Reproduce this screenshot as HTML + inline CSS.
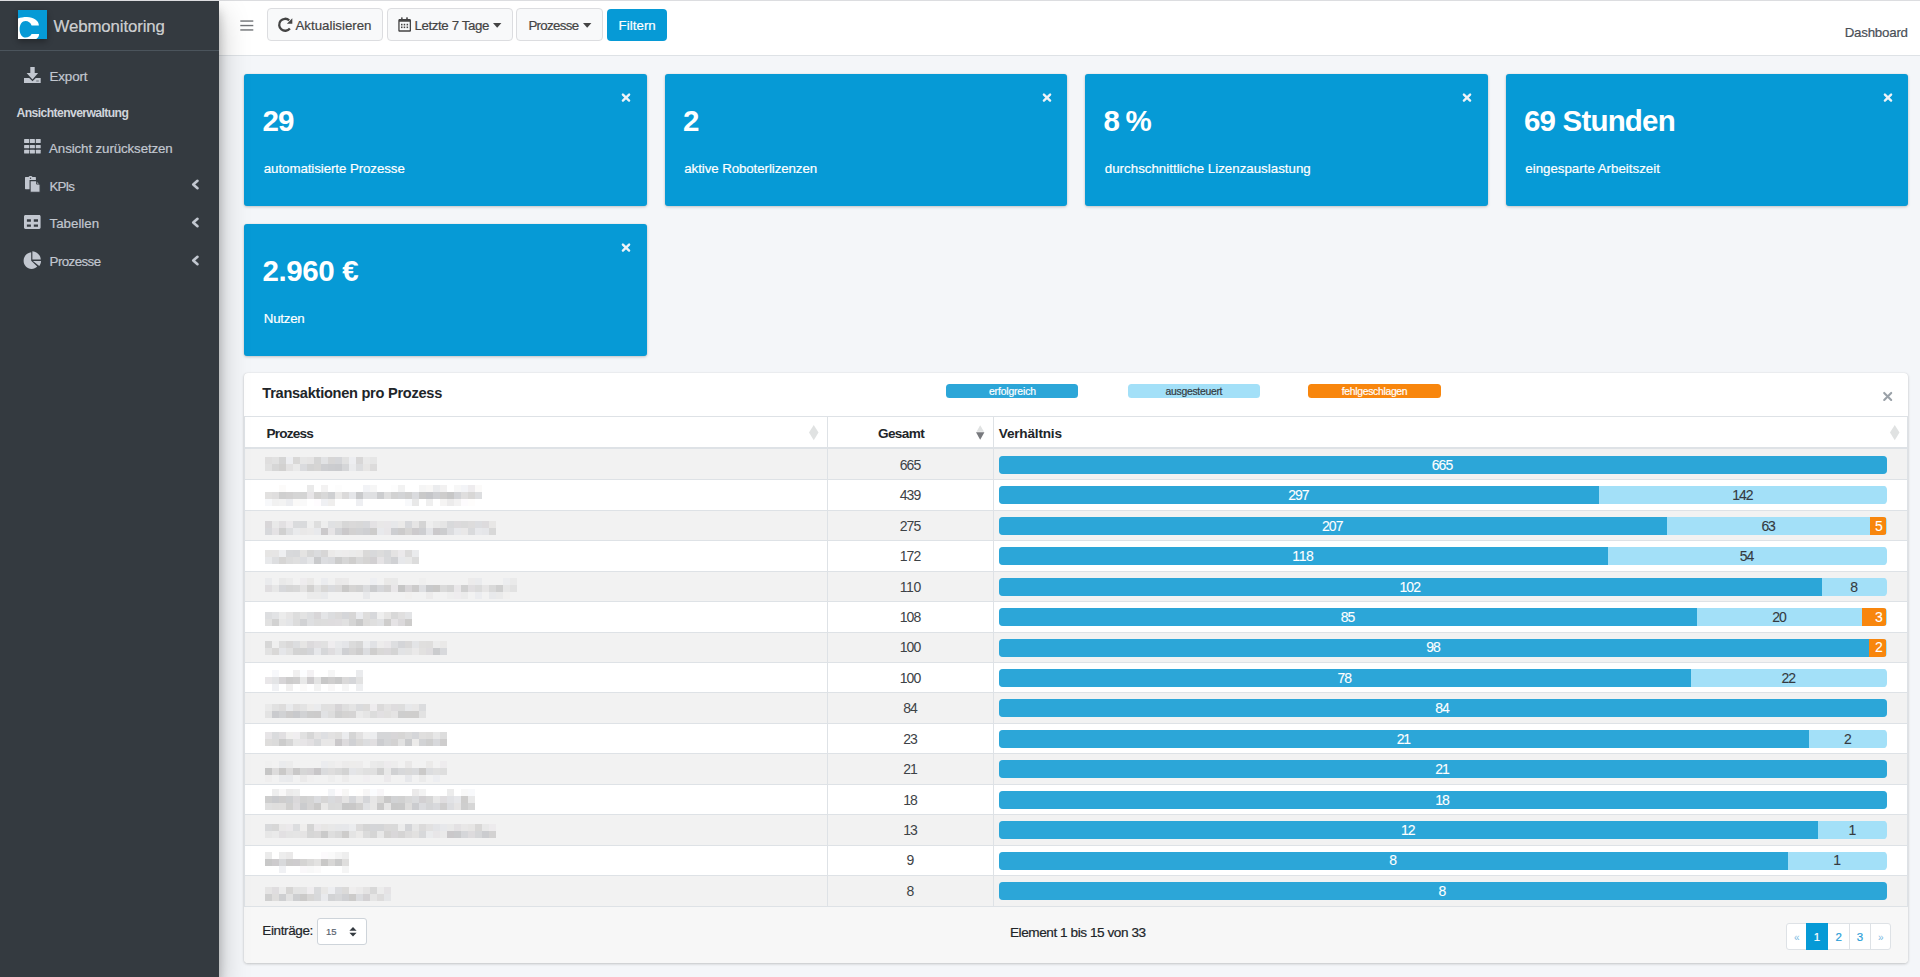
<!DOCTYPE html><html><head><meta charset="utf-8"><style>
html,body{margin:0;padding:0;width:1920px;height:977px;overflow:hidden;background:#f4f6f9;font-family:"Liberation Sans",sans-serif;}
.t{position:absolute;white-space:nowrap;font-family:"Liberation Sans",sans-serif;-webkit-text-stroke:0.2px currentColor;}
svg{position:absolute;overflow:visible}
</style></head><body>

<div style="position:absolute;left:0px;top:0px;width:1920px;height:1px;background:#dcdde0;"></div>
<div style="position:absolute;left:219px;top:1px;width:1701px;height:54px;background:#fff;"></div>
<div style="position:absolute;left:219px;top:55px;width:1701px;height:1px;background:#dee2e6;"></div>
<div style="position:absolute;left:0px;top:1px;width:219px;height:976px;background:#343a40;box-shadow:0 14px 28px rgba(0,0,0,.25),0 10px 10px rgba(0,0,0,.22);z-index:5;"></div>
<div style="position:absolute;left:0;top:0;width:219px;height:977px;z-index:6">
<div style="position:absolute;left:0px;top:0px;width:219px;height:1px;background:#dcdde0;"></div>
<div style="position:absolute;left:0px;top:50px;width:219px;height:1px;background:#4b545c;"></div>
<svg style="left:18px;top:10px;box-shadow:0 3px 6px rgba(0,0,0,.3)" width="29" height="29" viewBox="0 0 29 29">
<rect width="29" height="29" fill="#069ad6"/>
<path d="M0 8.6 C2.5 7.6 5.5 7.1 9 7.1 C15.5 7.1 20.9 10.8 20.9 15.5 L13.6 15.5 C12.6 12.6 10.3 11 7.6 11 C4 11 1.6 14.5 1.6 19.2 C1.6 24 4 27.5 7.6 27.5 C10.3 27.5 12.6 26 13.6 23.9 L21.1 23.9 C21.1 26 20 27.8 18.2 29 L0 29 Z" fill="#fff"/>
</svg>
<div class="t" style="left:53.60px;top:16.00px;font-size:16.8px;line-height:22px;color:rgba(255,255,255,.74);letter-spacing:-0.104px;">Webmonitoring</div>
<svg style="left:24px;top:66px" width="17" height="18" viewBox="0 0 17 18">
<rect x="6.3" y="1" width="4.4" height="6.5" fill="#c2c7d0"/>
<path d="M2.6 7 H14.1 L8.5 13.6 Z" fill="#c2c7d0"/>
<path d="M0 12 H5.2 L8.5 15.2 L11.8 12 H16.7 V17 H0 Z" fill="#c2c7d0"/>
<rect x="12.2" y="14.5" width="2.6" height="1" fill="#343a40" opacity=".6"/>
</svg>
<div class="t" style="left:49.50px;top:68.20px;font-size:13.4px;line-height:18px;color:#c2c7d0;letter-spacing:-0.145px;">Export</div>
<div class="t" style="left:16.60px;top:105.00px;font-size:12.2px;line-height:16px;color:#d0d4db;font-weight:700;-webkit-text-stroke:0;letter-spacing:-0.611px;">Ansichtenverwaltung</div>
<svg style="left:24px;top:139px" width="17" height="15" viewBox="0 0 17 15">
<g fill="#c2c7d0">
<rect x="0.1" y="0.1" width="5" height="4" rx=".5"/><rect x="5.8" y="0.1" width="5.1" height="4" rx=".5"/><rect x="11.8" y="0.1" width="4.9" height="4" rx=".5"/>
<rect x="0.1" y="5.9" width="5" height="3.4" rx=".5"/><rect x="5.8" y="5.9" width="5.1" height="3.4" rx=".5"/><rect x="11.8" y="5.9" width="4.9" height="3.4" rx=".5"/>
<rect x="0.1" y="10.8" width="5" height="3.8" rx=".5"/><rect x="5.8" y="10.8" width="5.1" height="3.8" rx=".5"/><rect x="11.8" y="10.8" width="4.9" height="3.8" rx=".5"/>
</g></svg>
<div class="t" style="left:49.10px;top:139.80px;font-size:13.3px;line-height:18px;color:#c2c7d0;letter-spacing:-0.104px;">Ansicht zurücksetzen</div>
<svg style="left:25px;top:176px" width="16" height="17" viewBox="0 0 16 17">
<path d="M0.6 1 H3.6 C3.9 0.3 4.6 0 5.5 0 C6.4 0 7.1 0.3 7.4 1 H10.3 C10.6 1 10.9 1.3 10.9 1.6 V12.6 C10.9 12.9 10.6 13.2 10.3 13.2 H0.6 C0.3 13.2 0 12.9 0 12.6 V1.6 C0 1.3 .3 1 .6 1 Z" fill="#c2c7d0"/>
<circle cx="5.5" cy="2.2" r=".7" fill="#343a40"/>
<path d="M5.1 4.6 H11.3 L15.1 8.3 V16.3 H5.1 Z" fill="#c2c7d0" stroke="#343a40" stroke-width="1.1"/>
<path d="M11.6 4.6 V8.1 H15.1" fill="none" stroke="#343a40" stroke-width="0.9"/>
</svg>
<div class="t" style="left:49.60px;top:177.50px;font-size:13.3px;line-height:18px;color:#c2c7d0;letter-spacing:-0.921px;">KPIs</div>
<svg style="left:24px;top:215px" width="17" height="15" viewBox="0 0 17 15">
<path fill-rule="evenodd" fill="#c2c7d0" d="M1.5 0 H15.2 C16 0 16.6 .6 16.6 1.5 V12.6 C16.6 13.4 16 14 15.2 14 H1.5 C.6 14 0 13.4 0 12.6 V1.5 C0 .6 .6 0 1.5 0 Z M2.9 4.3 V6.7 H6.9 V4.3 Z M9.8 4.3 V6.7 H14 V4.3 Z M2.9 9.5 V11.8 H6.9 V9.5 Z M9.8 9.5 V11.8 H14 V9.5 Z"/>
</svg>
<div class="t" style="left:49.60px;top:215.20px;font-size:13.3px;line-height:18px;color:#c2c7d0;letter-spacing:-0.006px;">Tabellen</div>
<svg style="left:23px;top:251px" width="19" height="19" viewBox="0 0 19 19">
<path d="M8.2 1.2 V9.8 L14.2 15.6 C12.7 17 10.8 17.9 8.6 17.9 C4.1 17.9 0.6 14.2 0.6 9.7 C0.6 5.3 4 1.6 8.2 1.2 Z" fill="#c2c7d0"/>
<path d="M9.4 0.2 C13.9 0.4 17.6 4.1 17.8 8.6 H9.4 Z" fill="#c2c7d0"/>
<path d="M9.9 9.9 H18 C18 12 17.3 13.6 16.2 14.9 Z" fill="#c2c7d0"/>
</svg>
<div class="t" style="left:49.60px;top:253.00px;font-size:13.3px;line-height:18px;color:#c2c7d0;letter-spacing:-0.566px;">Prozesse</div>
<svg style="left:191px;top:180.3px" width="8" height="9" viewBox="0 0 8 9"><path d="M6.5 0.8 L2.2 4.5 L6.5 8.2" stroke="#c2c7d0" stroke-width="2.6" fill="none" stroke-linecap="round" stroke-linejoin="round"/></svg>
<svg style="left:191px;top:218.1px" width="8" height="9" viewBox="0 0 8 9"><path d="M6.5 0.8 L2.2 4.5 L6.5 8.2" stroke="#c2c7d0" stroke-width="2.6" fill="none" stroke-linecap="round" stroke-linejoin="round"/></svg>
<svg style="left:191px;top:256.1px" width="8" height="9" viewBox="0 0 8 9"><path d="M6.5 0.8 L2.2 4.5 L6.5 8.2" stroke="#c2c7d0" stroke-width="2.6" fill="none" stroke-linecap="round" stroke-linejoin="round"/></svg>
</div>
<svg style="left:240px;top:19px" width="14" height="13" viewBox="0 0 14 13"><g fill="#707377"><rect x="0.3" y="1.35" width="13" height="1.4"/><rect x="0.3" y="5.85" width="13" height="1.4"/><rect x="0.3" y="10.25" width="13" height="1.4"/></g></svg>
<div style="position:absolute;left:267px;top:8px;width:116px;height:33px;background:#f8f9fa;border:1px solid #dcdde0;border-radius:4px;box-sizing:border-box;"></div>
<div style="position:absolute;left:387px;top:8px;width:126px;height:33px;background:#f8f9fa;border:1px solid #dcdde0;border-radius:4px;box-sizing:border-box;"></div>
<div style="position:absolute;left:516px;top:8px;width:87px;height:33px;background:#f8f9fa;border:1px solid #dcdde0;border-radius:4px;box-sizing:border-box;"></div>
<div style="position:absolute;left:607px;top:9px;width:60px;height:32px;background:#069ad6;border-radius:4px;"></div>
<svg style="left:278px;top:17px" width="15" height="15" viewBox="0 0 15 15">
<path d="M11.2 3.3 A6 6 0 1 0 11.9 11.5" stroke="#444" stroke-width="2.3" fill="none"/>
<path d="M8.9 6.7 H14.3 V1.3 Z" fill="#444"/>
</svg>
<div class="t" style="left:295.50px;top:16.75px;font-size:13.3px;line-height:18px;color:#444;letter-spacing:-0.012px;">Aktualisieren</div>
<svg style="left:398px;top:17px" width="14" height="15" viewBox="0 0 14 15">
<path fill-rule="evenodd" fill="#444" d="M1.6 2.1 H11.7 C12.4 2.1 13 2.7 13 3.4 V13.4 C13 14.1 12.4 14.7 11.7 14.7 H1.6 C.9 14.7 .3 14.1 .3 13.4 V3.4 C.3 2.7 .9 2.1 1.6 2.1 Z M1.6 4.8 V13.3 H11.7 V4.8 Z"/>
<rect x="3.1" y="0.3" width="1.5" height="2.4" rx=".4" fill="#444"/><rect x="8.2" y="0.3" width="1.6" height="2.4" rx=".4" fill="#444"/>
<g fill="#444"><rect x="3" y="6.8" width="1.5" height="1.4"/><rect x="5.7" y="6.8" width="1.5" height="1.4"/><rect x="8.6" y="6.8" width="1.5" height="1.4"/>
<rect x="3" y="9.7" width="1.5" height="1.4"/><rect x="5.7" y="9.7" width="1.5" height="1.4"/><rect x="8.6" y="9.7" width="1.5" height="1.4"/></g>
<g fill="#444" opacity=".35"><rect x="3" y="8.2" width="1.5" height="1.5"/><rect x="5.7" y="8.2" width="1.5" height="1.5"/><rect x="8.6" y="8.2" width="1.5" height="1.5"/></g>
</svg>
<div class="t" style="left:414.40px;top:16.70px;font-size:13.3px;line-height:18px;color:#444;letter-spacing:-0.383px;">Letzte 7 Tage</div>
<svg style="left:493px;top:23px" width="9" height="5" viewBox="0 0 9 5"><path d="M0 0 H8.4 L4.2 4.8 Z" fill="#444"/></svg>
<div class="t" style="left:528.40px;top:16.70px;font-size:13.3px;line-height:18px;color:#444;letter-spacing:-0.666px;">Prozesse</div>
<svg style="left:583px;top:23px" width="9" height="5" viewBox="0 0 9 5"><path d="M0 0 H8.4 L4.2 4.8 Z" fill="#444"/></svg>
<div class="t" style="left:618.60px;top:16.70px;font-size:13.3px;line-height:18px;color:#fff;letter-spacing:0.038px;">Filtern</div>
<div class="t" style="left:1844.70px;top:24.00px;font-size:13.3px;line-height:18px;color:#495057;letter-spacing:-0.217px;">Dashboard</div>
<div style="position:absolute;left:244px;top:74px;width:402.5px;height:132px;background:#069ad6;border-radius:3px;box-shadow:0 0 1px rgba(0,0,0,.125),0 1px 3px rgba(0,0,0,.2);"></div>
<div class="t" style="left:262.50px;top:101.40px;font-size:29.5px;line-height:39px;color:#fff;font-weight:700;-webkit-text-stroke:0;letter-spacing:-0.945px;">29</div>
<div class="t" style="left:263.80px;top:159.80px;font-size:13.3px;line-height:18px;color:#fff;letter-spacing:-0.075px;">automatisierte Prozesse</div>
<svg style="left:621.0px;top:92.5px" width="10" height="9" viewBox="0 0 10 9"><path d="M1.9 1.6 L8.1 7.6 M8.1 1.6 L1.9 7.6" stroke="#eef3f7" stroke-width="2.4" stroke-linecap="round"/></svg>
<div style="position:absolute;left:664.5px;top:74px;width:402.5px;height:132px;background:#069ad6;border-radius:3px;box-shadow:0 0 1px rgba(0,0,0,.125),0 1px 3px rgba(0,0,0,.2);"></div>
<div class="t" style="left:683.00px;top:101.40px;font-size:29.5px;line-height:39px;color:#fff;font-weight:700;-webkit-text-stroke:0;">2</div>
<div class="t" style="left:684.30px;top:159.80px;font-size:13.3px;line-height:18px;color:#fff;letter-spacing:-0.082px;">aktive Roboterlizenzen</div>
<svg style="left:1041.5px;top:92.5px" width="10" height="9" viewBox="0 0 10 9"><path d="M1.9 1.6 L8.1 7.6 M8.1 1.6 L1.9 7.6" stroke="#eef3f7" stroke-width="2.4" stroke-linecap="round"/></svg>
<div style="position:absolute;left:1085px;top:74px;width:402.5px;height:132px;background:#069ad6;border-radius:3px;box-shadow:0 0 1px rgba(0,0,0,.125),0 1px 3px rgba(0,0,0,.2);"></div>
<div class="t" style="left:1103.50px;top:101.40px;font-size:29.5px;line-height:39px;color:#fff;font-weight:700;-webkit-text-stroke:0;letter-spacing:-1.344px;">8 %</div>
<div class="t" style="left:1104.80px;top:159.80px;font-size:13.3px;line-height:18px;color:#fff;letter-spacing:0.014px;">durchschnittliche Lizenzauslastung</div>
<svg style="left:1462.0px;top:92.5px" width="10" height="9" viewBox="0 0 10 9"><path d="M1.9 1.6 L8.1 7.6 M8.1 1.6 L1.9 7.6" stroke="#eef3f7" stroke-width="2.4" stroke-linecap="round"/></svg>
<div style="position:absolute;left:1505.5px;top:74px;width:402.5px;height:132px;background:#069ad6;border-radius:3px;box-shadow:0 0 1px rgba(0,0,0,.125),0 1px 3px rgba(0,0,0,.2);"></div>
<div class="t" style="left:1524.00px;top:101.40px;font-size:29.5px;line-height:39px;color:#fff;font-weight:700;-webkit-text-stroke:0;letter-spacing:-0.812px;">69 Stunden</div>
<div class="t" style="left:1525.30px;top:159.80px;font-size:13.3px;line-height:18px;color:#fff;">eingesparte Arbeitszeit</div>
<svg style="left:1882.5px;top:92.5px" width="10" height="9" viewBox="0 0 10 9"><path d="M1.9 1.6 L8.1 7.6 M8.1 1.6 L1.9 7.6" stroke="#eef3f7" stroke-width="2.4" stroke-linecap="round"/></svg>
<div style="position:absolute;left:244px;top:224px;width:402.5px;height:132px;background:#069ad6;border-radius:3px;box-shadow:0 0 1px rgba(0,0,0,.125),0 1px 3px rgba(0,0,0,.2);"></div>
<div class="t" style="left:262.50px;top:251.40px;font-size:29.5px;line-height:39px;color:#fff;font-weight:700;-webkit-text-stroke:0;letter-spacing:-0.397px;">2.960 €</div>
<div class="t" style="left:263.80px;top:309.80px;font-size:13.3px;line-height:18px;color:#fff;letter-spacing:-0.232px;">Nutzen</div>
<svg style="left:621.0px;top:242.5px" width="10" height="9" viewBox="0 0 10 9"><path d="M1.9 1.6 L8.1 7.6 M8.1 1.6 L1.9 7.6" stroke="#eef3f7" stroke-width="2.4" stroke-linecap="round"/></svg>
<div style="position:absolute;left:244px;top:373px;width:1664px;height:590px;background:#fff;border-radius:4px;box-shadow:0 0 1px rgba(0,0,0,.125),0 1px 3px rgba(0,0,0,.2);"></div>
<div class="t" style="left:262.30px;top:384.40px;font-size:14.6px;line-height:19px;color:#212529;font-weight:700;-webkit-text-stroke:0;letter-spacing:-0.274px;">Transaktionen pro Prozess</div>
<div style="position:absolute;left:946px;top:384px;width:132px;height:14px;background:#2ca6d8;border-radius:3.5px;"></div>
<div style="position:absolute;left:1128px;top:384px;width:132px;height:14px;background:#a3e0f8;border-radius:3.5px;"></div>
<div style="position:absolute;left:1308px;top:384px;width:133px;height:14px;background:#f8860d;border-radius:3.5px;"></div>
<div class="t" style="left:989.00px;top:384.60px;font-size:10.4px;line-height:14px;color:#fff;letter-spacing:-0.157px;">erfolgreich</div>
<div class="t" style="left:1165.50px;top:384.60px;font-size:10.4px;line-height:14px;color:#343a40;letter-spacing:-0.283px;">ausgesteuert</div>
<div class="t" style="left:1341.70px;top:384.60px;font-size:10.4px;line-height:14px;color:#fff;letter-spacing:-0.307px;">fehlgeschlagen</div>
<svg style="left:1883px;top:392px" width="10" height="9" viewBox="0 0 10 9"><path d="M1.2 0.9 L8.2 7.9 M8.2 0.9 L1.2 7.9" stroke="#9aa1a8" stroke-width="2.1" stroke-linecap="round"/></svg>
<div style="position:absolute;left:244px;top:416px;width:1664px;height:1px;background:#dee2e6;"></div>
<div style="position:absolute;left:244px;top:417px;width:1px;height:489px;background:#dee2e6;"></div>
<div style="position:absolute;left:1907px;top:417px;width:1px;height:489px;background:#dee2e6;"></div>
<div style="position:absolute;left:827px;top:417px;width:1px;height:489px;background:#dee2e6;"></div>
<div style="position:absolute;left:993px;top:417px;width:1px;height:489px;background:#dee2e6;"></div>
<div style="position:absolute;left:244px;top:447px;width:1664px;height:2px;background:#dee2e6;"></div>
<div class="t" style="left:266.60px;top:424.70px;font-size:13.6px;line-height:18px;color:#212529;font-weight:700;-webkit-text-stroke:0;letter-spacing:-0.809px;">Prozess</div>
<div class="t" style="left:878.00px;top:425.10px;font-size:13.6px;line-height:18px;color:#212529;font-weight:700;-webkit-text-stroke:0;letter-spacing:-0.642px;">Gesamt</div>
<div class="t" style="left:998.75px;top:425.00px;font-size:13.6px;line-height:18px;color:#212529;font-weight:700;-webkit-text-stroke:0;letter-spacing:-0.190px;">Verhältnis</div>
<svg style="left:808.7px;top:425px" width="10" height="16" viewBox="0 0 10 16"><path d="M4.75 0 L9.5 7.6 L4.75 15.3 L0 7.6 Z" fill="#e0e2e2"/></svg>
<svg style="left:975.5px;top:425px" width="9" height="15" viewBox="0 0 9 15"><path d="M4.2 0.2 L8 6.8 H0.5 Z" fill="#e0e2e2"/><path d="M4.2 14.8 L8.4 7.3 H0 Z" fill="#77797d"/></svg>
<svg style="left:1889.6px;top:425px" width="10" height="16" viewBox="0 0 10 16"><path d="M4.75 0 L9.5 7.6 L4.75 15.3 L0 7.6 Z" fill="#e0e2e2"/></svg>
<div style="position:absolute;left:245px;top:449px;width:582px;height:30px;background:#f2f2f2;"></div>
<div style="position:absolute;left:828px;top:449px;width:165px;height:30px;background:#f2f2f2;"></div>
<div style="position:absolute;left:994px;top:449px;width:913px;height:30px;background:#f2f2f2;"></div>
<div class="t" style="left:899.75px;top:455.76px;font-size:14px;line-height:19px;color:#3d4246;letter-spacing:-0.940px;-webkit-text-stroke:0;">665</div>
<div style="position:absolute;left:998.5px;top:455.96px;width:888.0px;height:18px;border-radius:4px;overflow:hidden;background:#a3e0f8">
<div style="position:absolute;left:0.00px;top:0;width:888.00px;height:18px;background:#2ca6d8"></div>
</div>
<div class="t" style="left:1431.75px;top:455.76px;font-size:14px;line-height:19px;color:#fff;letter-spacing:-0.940px;-webkit-text-stroke:0.1px currentColor;">665</div>
<div style="position:absolute;left:265px;top:457px;width:112px;height:7px;background:linear-gradient(to right,rgb(223,222,222) 0px 7px,rgb(225,225,225) 7px 14px,rgb(213,213,213) 14px 21px,rgb(237,238,241) 21px 28px,rgb(217,216,215) 28px 35px,rgb(230,230,230) 35px 42px,rgb(229,228,228) 42px 49px,rgb(213,213,213) 49px 56px,rgb(225,226,228) 56px 63px,rgb(215,214,214) 63px 70px,rgb(213,214,217) 70px 77px,rgb(225,225,225) 77px 84px,rgb(237,238,241) 84px 91px,rgb(216,215,215) 91px 98px,rgb(233,233,233) 98px 105px,rgb(230,230,230) 105px 112px)"></div>
<div style="position:absolute;left:265px;top:464px;width:112px;height:7px;background:linear-gradient(to right,rgb(225,225,225) 0px 7px,rgb(214,214,214) 7px 14px,rgb(210,209,208) 14px 21px,rgb(227,226,226) 21px 28px,rgb(234,234,234) 28px 35px,rgb(218,219,222) 35px 42px,rgb(211,211,211) 42px 49px,rgb(214,213,212) 49px 56px,rgb(205,206,209) 56px 63px,rgb(203,204,207) 63px 70px,rgb(202,203,206) 70px 77px,rgb(213,214,216) 77px 84px,rgb(234,235,237) 84px 91px,rgb(220,221,223) 91px 98px,rgb(231,230,229) 98px 105px,rgb(220,219,219) 105px 112px)"></div>
<div style="position:absolute;left:245px;top:479px;width:1662px;height:1px;background:#dee2e6;"></div>
<div class="t" style="left:899.75px;top:486.20px;font-size:14px;line-height:19px;color:#3d4246;letter-spacing:-0.940px;-webkit-text-stroke:0;">439</div>
<div style="position:absolute;left:998.5px;top:486.40px;width:888.0px;height:18px;border-radius:4px;overflow:hidden;background:#a3e0f8">
<div style="position:absolute;left:0.00px;top:0;width:600.77px;height:18px;background:#2ca6d8"></div>
<div style="position:absolute;left:600.77px;top:0;width:287.23px;height:18px;background:#a3e0f8"></div>
</div>
<div class="t" style="left:1288.13px;top:486.20px;font-size:14px;line-height:19px;color:#fff;letter-spacing:-0.940px;-webkit-text-stroke:0.1px currentColor;">297</div>
<div class="t" style="left:1732.13px;top:486.20px;font-size:14px;line-height:19px;color:#343a40;letter-spacing:-0.940px;-webkit-text-stroke:0.1px currentColor;">142</div>
<div style="position:absolute;left:265px;top:485px;width:217px;height:7px;background:linear-gradient(to right,rgb(255,255,255) 0px 7px,rgb(255,255,255) 7px 14px,rgb(252,251,250) 14px 21px,rgb(255,255,255) 21px 28px,rgb(255,255,255) 28px 35px,rgb(255,255,255) 35px 42px,rgb(234,234,234) 42px 49px,rgb(255,255,255) 49px 56px,rgb(243,242,242) 56px 63px,rgb(255,255,255) 63px 70px,rgb(253,253,253) 70px 77px,rgb(255,255,255) 77px 84px,rgb(255,255,255) 84px 91px,rgb(255,255,255) 91px 98px,rgb(242,243,246) 98px 105px,rgb(246,246,246) 105px 112px,rgb(255,255,255) 112px 119px,rgb(255,255,255) 119px 126px,rgb(253,253,253) 126px 133px,rgb(242,242,242) 133px 140px,rgb(255,255,255) 140px 147px,rgb(255,255,255) 147px 154px,rgb(245,245,245) 154px 161px,rgb(248,247,246) 161px 168px,rgb(235,236,238) 168px 175px,rgb(242,241,241) 175px 182px,rgb(255,255,255) 182px 189px,rgb(247,247,247) 189px 196px,rgb(243,244,247) 196px 203px,rgb(238,236,238) 203px 210px,rgb(251,250,249) 210px 217px)"></div>
<div style="position:absolute;left:265px;top:492px;width:217px;height:7px;background:linear-gradient(to right,rgb(226,225,224) 0px 7px,rgb(223,222,222) 7px 14px,rgb(207,207,207) 14px 21px,rgb(210,209,209) 21px 28px,rgb(213,213,213) 28px 35px,rgb(212,212,212) 35px 42px,rgb(231,229,231) 42px 49px,rgb(211,210,209) 49px 56px,rgb(216,216,216) 56px 63px,rgb(207,208,210) 63px 70px,rgb(234,233,232) 70px 77px,rgb(219,218,218) 77px 84px,rgb(229,230,233) 84px 91px,rgb(201,202,204) 91px 98px,rgb(223,224,226) 98px 105px,rgb(223,224,226) 105px 112px,rgb(204,205,207) 112px 119px,rgb(223,223,223) 119px 126px,rgb(210,210,210) 126px 133px,rgb(211,212,214) 133px 140px,rgb(208,208,208) 140px 147px,rgb(218,219,222) 147px 154px,rgb(201,201,201) 154px 161px,rgb(197,198,201) 161px 168px,rgb(206,207,210) 168px 175px,rgb(206,205,204) 175px 182px,rgb(199,199,199) 182px 189px,rgb(210,211,214) 189px 196px,rgb(223,222,222) 196px 203px,rgb(216,215,214) 203px 210px,rgb(221,222,224) 210px 217px)"></div>
<div style="position:absolute;left:265px;top:499px;width:217px;height:7px;background:linear-gradient(to right,rgb(247,248,250) 0px 7px,rgb(241,241,241) 7px 14px,rgb(243,243,243) 14px 21px,rgb(236,237,240) 21px 28px,rgb(250,249,248) 28px 35px,rgb(249,249,249) 35px 42px,rgb(255,255,255) 42px 49px,rgb(254,252,254) 49px 56px,rgb(239,240,243) 56px 63px,rgb(239,238,237) 63px 70px,rgb(255,255,255) 70px 77px,rgb(255,255,255) 77px 84px,rgb(255,255,255) 84px 91px,rgb(238,239,242) 91px 98px,rgb(255,255,255) 98px 105px,rgb(255,255,255) 105px 112px,rgb(255,255,255) 112px 119px,rgb(255,255,255) 119px 126px,rgb(255,255,255) 126px 133px,rgb(255,255,255) 133px 140px,rgb(248,249,251) 140px 147px,rgb(232,232,232) 147px 154px,rgb(255,255,255) 154px 161px,rgb(239,239,239) 161px 168px,rgb(255,255,255) 168px 175px,rgb(245,244,243) 175px 182px,rgb(236,235,235) 182px 189px,rgb(243,242,242) 189px 196px,rgb(253,251,253) 196px 203px,rgb(254,253,252) 203px 210px,rgb(255,255,255) 210px 217px)"></div>
<div style="position:absolute;left:245px;top:511px;width:582px;height:29px;background:#f2f2f2;"></div>
<div style="position:absolute;left:828px;top:511px;width:165px;height:29px;background:#f2f2f2;"></div>
<div style="position:absolute;left:994px;top:511px;width:913px;height:29px;background:#f2f2f2;"></div>
<div style="position:absolute;left:245px;top:510px;width:1662px;height:1px;background:#dee2e6;"></div>
<div class="t" style="left:899.75px;top:516.64px;font-size:14px;line-height:19px;color:#3d4246;letter-spacing:-0.940px;-webkit-text-stroke:0;">275</div>
<div style="position:absolute;left:998.5px;top:516.84px;width:888.0px;height:18px;border-radius:4px;overflow:hidden;background:#a3e0f8">
<div style="position:absolute;left:0.00px;top:0;width:668.42px;height:18px;background:#2ca6d8"></div>
<div style="position:absolute;left:668.42px;top:0;width:203.43px;height:18px;background:#a3e0f8"></div>
<div style="position:absolute;left:871.85px;top:0;width:16.15px;height:18px;background:#f8860d"></div>
</div>
<div class="t" style="left:1321.96px;top:516.64px;font-size:14px;line-height:19px;color:#fff;letter-spacing:-0.940px;-webkit-text-stroke:0.1px currentColor;">207</div>
<div class="t" style="left:1761.39px;top:516.64px;font-size:14px;line-height:19px;color:#343a40;letter-spacing:-1.040px;-webkit-text-stroke:0.1px currentColor;">63</div>
<div class="t" style="left:1875.12px;top:516.64px;font-size:14px;line-height:19px;color:#fff;-webkit-text-stroke:0.1px currentColor;">5</div>
<div style="position:absolute;left:265px;top:521px;width:231px;height:7px;background:linear-gradient(to right,rgb(216,214,216) 0px 7px,rgb(233,233,233) 7px 14px,rgb(226,224,226) 14px 21px,rgb(236,234,236) 21px 28px,rgb(218,219,221) 28px 35px,rgb(217,218,220) 35px 42px,rgb(238,238,238) 42px 49px,rgb(222,222,222) 49px 56px,rgb(238,238,238) 56px 63px,rgb(224,225,227) 63px 70px,rgb(225,225,225) 70px 77px,rgb(215,215,215) 77px 84px,rgb(218,217,217) 84px 91px,rgb(216,216,216) 91px 98px,rgb(215,216,219) 98px 105px,rgb(228,226,228) 105px 112px,rgb(233,232,232) 112px 119px,rgb(233,231,233) 119px 126px,rgb(231,232,234) 126px 133px,rgb(235,234,233) 133px 140px,rgb(215,216,219) 140px 147px,rgb(230,229,229) 147px 154px,rgb(212,212,212) 154px 161px,rgb(238,238,238) 161px 168px,rgb(232,232,232) 168px 175px,rgb(229,229,229) 175px 182px,rgb(216,217,219) 182px 189px,rgb(220,218,220) 189px 196px,rgb(218,218,218) 196px 203px,rgb(221,220,220) 203px 210px,rgb(220,221,224) 210px 217px,rgb(221,219,221) 217px 224px,rgb(232,231,230) 224px 231px)"></div>
<div style="position:absolute;left:265px;top:528px;width:231px;height:7px;background:linear-gradient(to right,rgb(215,216,219) 0px 7px,rgb(228,226,228) 7px 14px,rgb(208,208,208) 14px 21px,rgb(222,223,225) 21px 28px,rgb(233,234,236) 28px 35px,rgb(233,232,232) 35px 42px,rgb(235,234,234) 42px 49px,rgb(232,233,236) 49px 56px,rgb(203,201,203) 56px 63px,rgb(230,228,230) 63px 70px,rgb(210,211,214) 70px 77px,rgb(202,200,202) 77px 84px,rgb(210,209,209) 84px 91px,rgb(209,210,212) 91px 98px,rgb(206,207,210) 98px 105px,rgb(205,204,203) 105px 112px,rgb(232,233,236) 112px 119px,rgb(232,230,232) 119px 126px,rgb(205,206,209) 126px 133px,rgb(204,203,203) 133px 140px,rgb(214,213,212) 140px 147px,rgb(204,202,204) 147px 154px,rgb(205,206,209) 154px 161px,rgb(227,228,231) 161px 168px,rgb(203,201,203) 168px 175px,rgb(204,205,207) 175px 182px,rgb(219,220,223) 182px 189px,rgb(231,232,235) 189px 196px,rgb(233,232,232) 196px 203px,rgb(217,218,220) 203px 210px,rgb(231,232,235) 210px 217px,rgb(229,230,233) 217px 224px,rgb(216,216,216) 224px 231px)"></div>
<div style="position:absolute;left:245px;top:540px;width:1662px;height:1px;background:#dee2e6;"></div>
<div class="t" style="left:899.75px;top:547.08px;font-size:14px;line-height:19px;color:#3d4246;letter-spacing:-0.940px;-webkit-text-stroke:0;">172</div>
<div style="position:absolute;left:998.5px;top:547.28px;width:888.0px;height:18px;border-radius:4px;overflow:hidden;background:#a3e0f8">
<div style="position:absolute;left:0.00px;top:0;width:609.21px;height:18px;background:#2ca6d8"></div>
<div style="position:absolute;left:609.21px;top:0;width:278.79px;height:18px;background:#a3e0f8"></div>
</div>
<div class="t" style="left:1292.35px;top:547.08px;font-size:14px;line-height:19px;color:#fff;letter-spacing:-0.415px;-webkit-text-stroke:0.1px currentColor;">118</div>
<div class="t" style="left:1739.85px;top:547.08px;font-size:14px;line-height:19px;color:#343a40;letter-spacing:-1.040px;-webkit-text-stroke:0.1px currentColor;">54</div>
<div style="position:absolute;left:265px;top:549.5px;width:154px;height:7px;background:linear-gradient(to right,rgb(230,229,228) 0px 7px,rgb(230,229,229) 7px 14px,rgb(238,239,241) 14px 21px,rgb(216,217,219) 21px 28px,rgb(215,216,218) 28px 35px,rgb(228,227,226) 35px 42px,rgb(215,215,215) 42px 49px,rgb(219,220,222) 49px 56px,rgb(215,214,214) 56px 63px,rgb(235,234,233) 63px 70px,rgb(237,237,237) 70px 77px,rgb(237,236,236) 77px 84px,rgb(235,235,235) 84px 91px,rgb(235,234,233) 91px 98px,rgb(218,217,216) 98px 105px,rgb(216,217,219) 105px 112px,rgb(220,220,220) 112px 119px,rgb(215,216,218) 119px 126px,rgb(228,227,227) 126px 133px,rgb(235,233,235) 133px 140px,rgb(220,219,219) 140px 147px,rgb(234,235,237) 147px 154px)"></div>
<div style="position:absolute;left:265px;top:556.5px;width:154px;height:7px;background:linear-gradient(to right,rgb(232,233,235) 0px 7px,rgb(221,222,224) 7px 14px,rgb(214,213,212) 14px 21px,rgb(220,220,220) 21px 28px,rgb(223,223,223) 28px 35px,rgb(220,221,224) 35px 42px,rgb(229,230,232) 42px 49px,rgb(201,202,204) 49px 56px,rgb(220,221,224) 56px 63px,rgb(217,218,221) 63px 70px,rgb(204,204,204) 70px 77px,rgb(214,214,214) 77px 84px,rgb(207,206,205) 84px 91px,rgb(217,217,217) 91px 98px,rgb(213,212,211) 98px 105px,rgb(210,208,210) 105px 112px,rgb(229,227,229) 112px 119px,rgb(216,217,219) 119px 126px,rgb(208,209,212) 126px 133px,rgb(231,232,235) 133px 140px,rgb(232,232,232) 140px 147px,rgb(220,220,220) 147px 154px)"></div>
<div style="position:absolute;left:245px;top:572px;width:582px;height:29px;background:#f2f2f2;"></div>
<div style="position:absolute;left:828px;top:572px;width:165px;height:29px;background:#f2f2f2;"></div>
<div style="position:absolute;left:994px;top:572px;width:913px;height:29px;background:#f2f2f2;"></div>
<div style="position:absolute;left:245px;top:571px;width:1662px;height:1px;background:#dee2e6;"></div>
<div class="t" style="left:899.75px;top:577.52px;font-size:14px;line-height:19px;color:#3d4246;letter-spacing:-0.415px;-webkit-text-stroke:0;">110</div>
<div style="position:absolute;left:998.5px;top:577.72px;width:888.0px;height:18px;border-radius:4px;overflow:hidden;background:#a3e0f8">
<div style="position:absolute;left:0.00px;top:0;width:823.42px;height:18px;background:#2ca6d8"></div>
<div style="position:absolute;left:823.42px;top:0;width:64.58px;height:18px;background:#a3e0f8"></div>
</div>
<div class="t" style="left:1399.46px;top:577.52px;font-size:14px;line-height:19px;color:#fff;letter-spacing:-0.940px;-webkit-text-stroke:0.1px currentColor;">102</div>
<div class="t" style="left:1850.32px;top:577.52px;font-size:14px;line-height:19px;color:#343a40;-webkit-text-stroke:0.1px currentColor;">8</div>
<div style="position:absolute;left:265px;top:577.5px;width:252px;height:7px;background:linear-gradient(to right,rgb(234,235,237) 0px 7px,rgb(242,242,242) 7px 14px,rgb(233,233,233) 14px 21px,rgb(236,236,236) 21px 28px,rgb(242,242,242) 28px 35px,rgb(238,236,238) 35px 42px,rgb(234,233,232) 42px 49px,rgb(242,242,242) 49px 56px,rgb(235,236,239) 56px 63px,rgb(241,241,241) 63px 70px,rgb(234,233,233) 70px 77px,rgb(235,234,234) 77px 84px,rgb(242,242,242) 84px 91px,rgb(242,242,242) 91px 98px,rgb(242,242,242) 98px 105px,rgb(238,239,242) 105px 112px,rgb(242,242,242) 112px 119px,rgb(234,233,232) 119px 126px,rgb(233,233,233) 126px 133px,rgb(242,242,242) 133px 140px,rgb(242,242,242) 140px 147px,rgb(242,242,242) 147px 154px,rgb(239,239,239) 154px 161px,rgb(242,242,242) 161px 168px,rgb(242,242,242) 168px 175px,rgb(242,242,242) 175px 182px,rgb(242,242,242) 182px 189px,rgb(242,242,242) 189px 196px,rgb(242,242,242) 196px 203px,rgb(236,235,235) 203px 210px,rgb(234,235,237) 210px 217px,rgb(242,242,242) 217px 224px,rgb(242,242,242) 224px 231px,rgb(242,242,242) 231px 238px,rgb(236,237,239) 238px 245px,rgb(234,234,234) 245px 252px)"></div>
<div style="position:absolute;left:265px;top:584.5px;width:252px;height:7px;background:linear-gradient(to right,rgb(224,222,224) 0px 7px,rgb(231,231,231) 7px 14px,rgb(215,216,219) 14px 21px,rgb(214,214,214) 21px 28px,rgb(216,216,216) 28px 35px,rgb(228,227,227) 35px 42px,rgb(210,209,208) 42px 49px,rgb(226,226,226) 49px 56px,rgb(216,215,214) 56px 63px,rgb(218,219,222) 63px 70px,rgb(219,218,218) 70px 77px,rgb(202,201,200) 77px 84px,rgb(213,212,211) 84px 91px,rgb(209,209,209) 91px 98px,rgb(219,220,222) 98px 105px,rgb(203,204,206) 105px 112px,rgb(214,215,218) 112px 119px,rgb(211,210,210) 119px 126px,rgb(232,230,232) 126px 133px,rgb(198,198,198) 133px 140px,rgb(216,214,216) 140px 147px,rgb(204,203,203) 147px 154px,rgb(222,223,226) 154px 161px,rgb(200,201,203) 161px 168px,rgb(201,200,199) 168px 175px,rgb(218,218,218) 175px 182px,rgb(212,212,212) 182px 189px,rgb(233,231,233) 189px 196px,rgb(208,208,208) 196px 203px,rgb(224,222,224) 203px 210px,rgb(219,219,219) 210px 217px,rgb(230,229,229) 217px 224px,rgb(217,217,217) 224px 231px,rgb(207,207,207) 231px 238px,rgb(231,231,231) 238px 245px,rgb(226,226,226) 245px 252px)"></div>
<div style="position:absolute;left:265px;top:591.5px;width:252px;height:7px;background:linear-gradient(to right,rgb(242,242,242) 0px 7px,rgb(242,242,242) 7px 14px,rgb(242,242,242) 14px 21px,rgb(242,242,242) 21px 28px,rgb(242,242,242) 28px 35px,rgb(242,242,242) 35px 42px,rgb(235,235,235) 42px 49px,rgb(235,235,235) 49px 56px,rgb(233,234,236) 56px 63px,rgb(242,242,242) 63px 70px,rgb(242,242,242) 70px 77px,rgb(242,242,242) 77px 84px,rgb(242,242,242) 84px 91px,rgb(242,242,242) 91px 98px,rgb(232,233,235) 98px 105px,rgb(242,242,242) 105px 112px,rgb(242,242,242) 112px 119px,rgb(242,242,242) 119px 126px,rgb(242,242,242) 126px 133px,rgb(242,242,242) 133px 140px,rgb(241,240,239) 140px 147px,rgb(242,242,242) 147px 154px,rgb(242,242,242) 154px 161px,rgb(236,235,235) 161px 168px,rgb(242,242,242) 168px 175px,rgb(242,242,242) 175px 182px,rgb(238,238,238) 182px 189px,rgb(238,236,238) 189px 196px,rgb(235,235,235) 196px 203px,rgb(242,242,242) 203px 210px,rgb(235,236,239) 210px 217px,rgb(242,242,242) 217px 224px,rgb(232,233,235) 224px 231px,rgb(234,234,234) 231px 238px,rgb(241,240,239) 238px 245px,rgb(242,242,242) 245px 252px)"></div>
<div style="position:absolute;left:245px;top:601px;width:1662px;height:1px;background:#dee2e6;"></div>
<div class="t" style="left:899.75px;top:607.96px;font-size:14px;line-height:19px;color:#3d4246;letter-spacing:-0.940px;-webkit-text-stroke:0;">108</div>
<div style="position:absolute;left:998.5px;top:608.16px;width:888.0px;height:18px;border-radius:4px;overflow:hidden;background:#a3e0f8">
<div style="position:absolute;left:0.00px;top:0;width:698.89px;height:18px;background:#2ca6d8"></div>
<div style="position:absolute;left:698.89px;top:0;width:164.44px;height:18px;background:#a3e0f8"></div>
<div style="position:absolute;left:863.33px;top:0;width:24.67px;height:18px;background:#f8860d"></div>
</div>
<div class="t" style="left:1340.69px;top:607.96px;font-size:14px;line-height:19px;color:#fff;letter-spacing:-1.040px;-webkit-text-stroke:0.1px currentColor;">85</div>
<div class="t" style="left:1772.36px;top:607.96px;font-size:14px;line-height:19px;color:#343a40;letter-spacing:-1.040px;-webkit-text-stroke:0.1px currentColor;">20</div>
<div class="t" style="left:1875.12px;top:607.96px;font-size:14px;line-height:19px;color:#fff;-webkit-text-stroke:0.1px currentColor;">3</div>
<div style="position:absolute;left:265px;top:612px;width:147px;height:7px;background:linear-gradient(to right,rgb(221,222,224) 0px 7px,rgb(226,227,229) 7px 14px,rgb(236,236,236) 14px 21px,rgb(230,229,229) 21px 28px,rgb(221,221,221) 28px 35px,rgb(227,227,227) 35px 42px,rgb(221,222,224) 42px 49px,rgb(216,214,216) 49px 56px,rgb(228,229,231) 56px 63px,rgb(220,221,223) 63px 70px,rgb(219,218,218) 70px 77px,rgb(213,214,217) 77px 84px,rgb(215,214,214) 84px 91px,rgb(234,235,238) 91px 98px,rgb(222,221,220) 98px 105px,rgb(215,216,219) 105px 112px,rgb(239,239,239) 112px 119px,rgb(230,229,228) 119px 126px,rgb(216,216,216) 126px 133px,rgb(224,223,223) 133px 140px,rgb(227,228,230) 140px 147px)"></div>
<div style="position:absolute;left:265px;top:619px;width:147px;height:7px;background:linear-gradient(to right,rgb(225,225,225) 0px 7px,rgb(210,210,210) 7px 14px,rgb(232,232,232) 14px 21px,rgb(228,229,231) 21px 28px,rgb(220,220,220) 28px 35px,rgb(209,210,212) 35px 42px,rgb(222,223,225) 42px 49px,rgb(220,220,220) 49px 56px,rgb(221,221,221) 56px 63px,rgb(222,220,222) 63px 70px,rgb(223,221,223) 70px 77px,rgb(225,225,225) 77px 84px,rgb(213,213,213) 84px 91px,rgb(201,201,201) 91px 98px,rgb(220,219,218) 98px 105px,rgb(223,223,223) 105px 112px,rgb(225,226,228) 112px 119px,rgb(206,205,204) 119px 126px,rgb(229,227,229) 126px 133px,rgb(219,217,219) 133px 140px,rgb(205,204,203) 140px 147px)"></div>
<div style="position:absolute;left:245px;top:633px;width:582px;height:29px;background:#f2f2f2;"></div>
<div style="position:absolute;left:828px;top:633px;width:165px;height:29px;background:#f2f2f2;"></div>
<div style="position:absolute;left:994px;top:633px;width:913px;height:29px;background:#f2f2f2;"></div>
<div style="position:absolute;left:245px;top:632px;width:1662px;height:1px;background:#dee2e6;"></div>
<div class="t" style="left:899.75px;top:638.40px;font-size:14px;line-height:19px;color:#3d4246;letter-spacing:-0.940px;-webkit-text-stroke:0;">100</div>
<div style="position:absolute;left:998.5px;top:638.60px;width:888.0px;height:18px;border-radius:4px;overflow:hidden;background:#a3e0f8">
<div style="position:absolute;left:0.00px;top:0;width:870.24px;height:18px;background:#2ca6d8"></div>
<div style="position:absolute;left:870.24px;top:0;width:17.76px;height:18px;background:#f8860d"></div>
</div>
<div class="t" style="left:1426.37px;top:638.40px;font-size:14px;line-height:19px;color:#fff;letter-spacing:-1.040px;-webkit-text-stroke:0.1px currentColor;">98</div>
<div class="t" style="left:1875.12px;top:638.40px;font-size:14px;line-height:19px;color:#fff;-webkit-text-stroke:0.1px currentColor;">2</div>
<div style="position:absolute;left:265px;top:641px;width:182px;height:7px;background:linear-gradient(to right,rgb(215,215,215) 0px 7px,rgb(239,239,239) 7px 14px,rgb(222,222,222) 14px 21px,rgb(217,216,216) 21px 28px,rgb(220,221,223) 28px 35px,rgb(230,229,228) 35px 42px,rgb(220,218,220) 42px 49px,rgb(225,223,225) 49px 56px,rgb(225,225,225) 56px 63px,rgb(239,237,239) 63px 70px,rgb(232,233,235) 70px 77px,rgb(228,229,232) 77px 84px,rgb(219,219,219) 84px 91px,rgb(214,214,214) 91px 98px,rgb(235,236,238) 98px 105px,rgb(225,226,229) 105px 112px,rgb(237,236,236) 112px 119px,rgb(234,232,234) 119px 126px,rgb(221,222,224) 126px 133px,rgb(212,213,216) 133px 140px,rgb(217,216,216) 140px 147px,rgb(227,228,230) 147px 154px,rgb(224,223,222) 154px 161px,rgb(223,222,221) 161px 168px,rgb(236,236,236) 168px 175px,rgb(234,233,232) 175px 182px)"></div>
<div style="position:absolute;left:265px;top:648px;width:182px;height:7px;background:linear-gradient(to right,rgb(226,226,226) 0px 7px,rgb(217,216,215) 7px 14px,rgb(229,230,233) 14px 21px,rgb(225,225,225) 21px 28px,rgb(211,211,211) 28px 35px,rgb(210,210,210) 35px 42px,rgb(212,213,216) 42px 49px,rgb(230,231,234) 49px 56px,rgb(214,215,217) 56px 63px,rgb(223,221,223) 63px 70px,rgb(228,229,231) 70px 77px,rgb(207,208,211) 77px 84px,rgb(213,212,212) 84px 91px,rgb(206,205,205) 91px 98px,rgb(220,221,224) 98px 105px,rgb(207,206,205) 105px 112px,rgb(217,216,215) 112px 119px,rgb(218,216,218) 119px 126px,rgb(212,212,212) 126px 133px,rgb(226,227,229) 133px 140px,rgb(227,227,227) 140px 147px,rgb(234,233,233) 147px 154px,rgb(226,225,224) 154px 161px,rgb(223,221,223) 161px 168px,rgb(203,204,206) 168px 175px,rgb(216,217,220) 175px 182px)"></div>
<div style="position:absolute;left:245px;top:662px;width:1662px;height:1px;background:#dee2e6;"></div>
<div class="t" style="left:899.75px;top:668.84px;font-size:14px;line-height:19px;color:#3d4246;letter-spacing:-0.940px;-webkit-text-stroke:0;">100</div>
<div style="position:absolute;left:998.5px;top:669.04px;width:888.0px;height:18px;border-radius:4px;overflow:hidden;background:#a3e0f8">
<div style="position:absolute;left:0.00px;top:0;width:692.64px;height:18px;background:#2ca6d8"></div>
<div style="position:absolute;left:692.64px;top:0;width:195.36px;height:18px;background:#a3e0f8"></div>
</div>
<div class="t" style="left:1337.57px;top:668.84px;font-size:14px;line-height:19px;color:#fff;letter-spacing:-1.040px;-webkit-text-stroke:0.1px currentColor;">78</div>
<div class="t" style="left:1781.57px;top:668.84px;font-size:14px;line-height:19px;color:#343a40;letter-spacing:-1.040px;-webkit-text-stroke:0.1px currentColor;">22</div>
<div style="position:absolute;left:265px;top:669.5px;width:98px;height:7px;background:linear-gradient(to right,rgb(255,255,255) 0px 7px,rgb(247,248,251) 7px 14px,rgb(255,255,255) 14px 21px,rgb(255,255,255) 21px 28px,rgb(241,240,240) 28px 35px,rgb(252,253,255) 35px 42px,rgb(243,241,243) 42px 49px,rgb(255,255,255) 49px 56px,rgb(255,255,255) 56px 63px,rgb(246,246,246) 63px 70px,rgb(255,255,255) 70px 77px,rgb(255,255,255) 77px 84px,rgb(255,255,255) 84px 91px,rgb(234,235,237) 91px 98px)"></div>
<div style="position:absolute;left:265px;top:676.5px;width:98px;height:7px;background:linear-gradient(to right,rgb(233,231,233) 0px 7px,rgb(227,228,230) 7px 14px,rgb(215,213,215) 14px 21px,rgb(205,204,204) 21px 28px,rgb(208,207,207) 28px 35px,rgb(232,232,232) 35px 42px,rgb(206,204,206) 42px 49px,rgb(227,227,227) 49px 56px,rgb(200,200,200) 56px 63px,rgb(207,206,206) 63px 70px,rgb(201,201,201) 70px 77px,rgb(218,217,217) 77px 84px,rgb(213,214,217) 84px 91px,rgb(226,226,226) 91px 98px)"></div>
<div style="position:absolute;left:265px;top:683.5px;width:98px;height:7px;background:linear-gradient(to right,rgb(255,255,255) 0px 7px,rgb(240,241,244) 7px 14px,rgb(255,255,255) 14px 21px,rgb(241,240,240) 21px 28px,rgb(255,255,255) 28px 35px,rgb(251,250,249) 35px 42px,rgb(255,255,255) 42px 49px,rgb(243,243,243) 49px 56px,rgb(255,255,255) 56px 63px,rgb(249,248,248) 63px 70px,rgb(255,255,255) 70px 77px,rgb(246,246,246) 77px 84px,rgb(255,255,255) 84px 91px,rgb(238,239,241) 91px 98px)"></div>
<div style="position:absolute;left:245px;top:693px;width:582px;height:30px;background:#f2f2f2;"></div>
<div style="position:absolute;left:828px;top:693px;width:165px;height:30px;background:#f2f2f2;"></div>
<div style="position:absolute;left:994px;top:693px;width:913px;height:30px;background:#f2f2f2;"></div>
<div style="position:absolute;left:245px;top:692px;width:1662px;height:1px;background:#dee2e6;"></div>
<div class="t" style="left:903.25px;top:699.28px;font-size:14px;line-height:19px;color:#3d4246;letter-spacing:-1.040px;-webkit-text-stroke:0;">84</div>
<div style="position:absolute;left:998.5px;top:699.48px;width:888.0px;height:18px;border-radius:4px;overflow:hidden;background:#a3e0f8">
<div style="position:absolute;left:0.00px;top:0;width:888.00px;height:18px;background:#2ca6d8"></div>
</div>
<div class="t" style="left:1435.25px;top:699.28px;font-size:14px;line-height:19px;color:#fff;letter-spacing:-1.040px;-webkit-text-stroke:0.1px currentColor;">84</div>
<div style="position:absolute;left:265px;top:704px;width:161px;height:7px;background:linear-gradient(to right,rgb(234,234,234) 0px 7px,rgb(225,225,225) 7px 14px,rgb(221,220,220) 14px 21px,rgb(233,234,236) 21px 28px,rgb(224,223,223) 28px 35px,rgb(227,227,227) 35px 42px,rgb(236,235,234) 42px 49px,rgb(234,235,237) 49px 56px,rgb(224,224,224) 56px 63px,rgb(225,224,224) 63px 70px,rgb(214,212,214) 70px 77px,rgb(222,222,222) 77px 84px,rgb(228,228,228) 84px 91px,rgb(218,219,221) 91px 98px,rgb(220,219,218) 98px 105px,rgb(238,236,238) 105px 112px,rgb(219,218,218) 112px 119px,rgb(227,226,226) 119px 126px,rgb(222,220,222) 126px 133px,rgb(221,221,221) 133px 140px,rgb(231,232,234) 140px 147px,rgb(232,231,231) 147px 154px,rgb(219,220,222) 154px 161px)"></div>
<div style="position:absolute;left:265px;top:711px;width:161px;height:7px;background:linear-gradient(to right,rgb(227,227,227) 0px 7px,rgb(202,203,206) 7px 14px,rgb(209,210,212) 14px 21px,rgb(204,203,203) 21px 28px,rgb(200,201,204) 28px 35px,rgb(209,210,212) 35px 42px,rgb(204,204,204) 42px 49px,rgb(204,203,203) 49px 56px,rgb(225,226,228) 56px 63px,rgb(221,221,221) 63px 70px,rgb(207,207,207) 70px 77px,rgb(212,211,210) 77px 84px,rgb(213,212,212) 84px 91px,rgb(234,234,234) 91px 98px,rgb(229,229,229) 98px 105px,rgb(220,220,220) 105px 112px,rgb(226,224,226) 112px 119px,rgb(225,224,223) 119px 126px,rgb(229,228,228) 126px 133px,rgb(206,206,206) 133px 140px,rgb(207,206,205) 140px 147px,rgb(207,206,205) 147px 154px,rgb(226,226,226) 154px 161px)"></div>
<div style="position:absolute;left:245px;top:723px;width:1662px;height:1px;background:#dee2e6;"></div>
<div class="t" style="left:903.25px;top:729.72px;font-size:14px;line-height:19px;color:#3d4246;letter-spacing:-1.040px;-webkit-text-stroke:0;">23</div>
<div style="position:absolute;left:998.5px;top:729.92px;width:888.0px;height:18px;border-radius:4px;overflow:hidden;background:#a3e0f8">
<div style="position:absolute;left:0.00px;top:0;width:810.78px;height:18px;background:#2ca6d8"></div>
<div style="position:absolute;left:810.78px;top:0;width:77.22px;height:18px;background:#a3e0f8"></div>
</div>
<div class="t" style="left:1396.64px;top:729.72px;font-size:14px;line-height:19px;color:#fff;letter-spacing:-1.040px;-webkit-text-stroke:0.1px currentColor;">21</div>
<div class="t" style="left:1844.01px;top:729.72px;font-size:14px;line-height:19px;color:#343a40;-webkit-text-stroke:0.1px currentColor;">2</div>
<div style="position:absolute;left:265px;top:732px;width:182px;height:7px;background:linear-gradient(to right,rgb(231,229,231) 0px 7px,rgb(218,219,221) 7px 14px,rgb(225,223,225) 14px 21px,rgb(240,239,238) 21px 28px,rgb(240,238,240) 28px 35px,rgb(225,225,225) 35px 42px,rgb(214,214,214) 42px 49px,rgb(228,227,227) 49px 56px,rgb(222,223,226) 56px 63px,rgb(227,226,226) 63px 70px,rgb(224,223,222) 70px 77px,rgb(235,236,238) 77px 84px,rgb(213,213,213) 84px 91px,rgb(226,225,225) 91px 98px,rgb(238,238,238) 98px 105px,rgb(236,237,239) 105px 112px,rgb(213,214,216) 112px 119px,rgb(213,214,216) 119px 126px,rgb(216,214,216) 126px 133px,rgb(215,214,213) 133px 140px,rgb(219,219,219) 140px 147px,rgb(213,214,217) 147px 154px,rgb(224,223,222) 154px 161px,rgb(222,221,220) 161px 168px,rgb(231,231,231) 168px 175px,rgb(221,221,221) 175px 182px)"></div>
<div style="position:absolute;left:265px;top:739px;width:182px;height:7px;background:linear-gradient(to right,rgb(222,221,220) 0px 7px,rgb(219,219,219) 7px 14px,rgb(204,204,204) 14px 21px,rgb(214,214,214) 21px 28px,rgb(231,231,231) 28px 35px,rgb(231,229,231) 35px 42px,rgb(226,224,226) 42px 49px,rgb(216,217,219) 49px 56px,rgb(232,231,231) 56px 63px,rgb(232,231,231) 63px 70px,rgb(202,200,202) 70px 77px,rgb(221,219,221) 77px 84px,rgb(208,209,212) 84px 91px,rgb(217,216,215) 91px 98px,rgb(220,221,223) 98px 105px,rgb(225,223,225) 105px 112px,rgb(204,205,208) 112px 119px,rgb(212,213,215) 119px 126px,rgb(211,210,210) 126px 133px,rgb(226,226,226) 133px 140px,rgb(202,203,205) 140px 147px,rgb(236,235,234) 147px 154px,rgb(210,211,213) 154px 161px,rgb(206,206,206) 161px 168px,rgb(215,216,219) 168px 175px,rgb(206,205,205) 175px 182px)"></div>
<div style="position:absolute;left:245px;top:754px;width:582px;height:30px;background:#f2f2f2;"></div>
<div style="position:absolute;left:828px;top:754px;width:165px;height:30px;background:#f2f2f2;"></div>
<div style="position:absolute;left:994px;top:754px;width:913px;height:30px;background:#f2f2f2;"></div>
<div style="position:absolute;left:245px;top:753px;width:1662px;height:1px;background:#dee2e6;"></div>
<div class="t" style="left:903.25px;top:760.16px;font-size:14px;line-height:19px;color:#3d4246;letter-spacing:-1.040px;-webkit-text-stroke:0;">21</div>
<div style="position:absolute;left:998.5px;top:760.36px;width:888.0px;height:18px;border-radius:4px;overflow:hidden;background:#a3e0f8">
<div style="position:absolute;left:0.00px;top:0;width:888.00px;height:18px;background:#2ca6d8"></div>
</div>
<div class="t" style="left:1435.25px;top:760.16px;font-size:14px;line-height:19px;color:#fff;letter-spacing:-1.040px;-webkit-text-stroke:0.1px currentColor;">21</div>
<div style="position:absolute;left:265px;top:760.5px;width:182px;height:7px;background:linear-gradient(to right,rgb(240,240,240) 0px 7px,rgb(242,242,242) 7px 14px,rgb(234,235,237) 14px 21px,rgb(236,236,236) 21px 28px,rgb(242,242,242) 28px 35px,rgb(242,242,242) 35px 42px,rgb(242,242,242) 42px 49px,rgb(242,242,242) 49px 56px,rgb(235,236,239) 56px 63px,rgb(237,237,237) 63px 70px,rgb(240,239,239) 70px 77px,rgb(236,235,235) 77px 84px,rgb(237,236,235) 84px 91px,rgb(237,236,236) 91px 98px,rgb(242,242,242) 98px 105px,rgb(234,234,234) 105px 112px,rgb(232,232,232) 112px 119px,rgb(237,235,237) 119px 126px,rgb(237,237,237) 126px 133px,rgb(242,242,242) 133px 140px,rgb(233,232,232) 140px 147px,rgb(242,242,242) 147px 154px,rgb(242,242,242) 154px 161px,rgb(235,234,233) 161px 168px,rgb(242,242,242) 168px 175px,rgb(238,236,238) 175px 182px)"></div>
<div style="position:absolute;left:265px;top:767.5px;width:182px;height:7px;background:linear-gradient(to right,rgb(198,198,198) 0px 7px,rgb(221,220,220) 7px 14px,rgb(202,201,200) 14px 21px,rgb(220,219,219) 21px 28px,rgb(201,200,200) 28px 35px,rgb(214,214,214) 35px 42px,rgb(213,211,213) 42px 49px,rgb(200,198,200) 49px 56px,rgb(218,219,221) 56px 63px,rgb(222,221,221) 63px 70px,rgb(217,217,217) 70px 77px,rgb(211,211,211) 77px 84px,rgb(228,229,232) 84px 91px,rgb(228,228,228) 91px 98px,rgb(224,224,224) 98px 105px,rgb(224,224,224) 105px 112px,rgb(208,208,208) 112px 119px,rgb(232,232,232) 119px 126px,rgb(208,209,211) 126px 133px,rgb(215,216,218) 133px 140px,rgb(217,217,217) 140px 147px,rgb(217,218,220) 147px 154px,rgb(203,202,201) 154px 161px,rgb(220,221,223) 161px 168px,rgb(224,224,224) 168px 175px,rgb(222,222,222) 175px 182px)"></div>
<div style="position:absolute;left:265px;top:774.5px;width:182px;height:7px;background:linear-gradient(to right,rgb(239,238,238) 0px 7px,rgb(242,242,242) 7px 14px,rgb(234,235,237) 14px 21px,rgb(233,234,236) 21px 28px,rgb(242,242,242) 28px 35px,rgb(235,234,234) 35px 42px,rgb(241,240,240) 42px 49px,rgb(242,242,242) 49px 56px,rgb(242,242,242) 56px 63px,rgb(238,238,238) 63px 70px,rgb(242,242,242) 70px 77px,rgb(237,236,236) 77px 84px,rgb(242,242,242) 84px 91px,rgb(242,242,242) 91px 98px,rgb(241,239,241) 98px 105px,rgb(242,242,242) 105px 112px,rgb(242,242,242) 112px 119px,rgb(236,234,236) 119px 126px,rgb(242,242,242) 126px 133px,rgb(242,242,242) 133px 140px,rgb(231,232,235) 140px 147px,rgb(242,242,242) 147px 154px,rgb(235,235,235) 154px 161px,rgb(242,242,242) 161px 168px,rgb(237,238,241) 168px 175px,rgb(242,242,242) 175px 182px)"></div>
<div style="position:absolute;left:245px;top:784px;width:1662px;height:1px;background:#dee2e6;"></div>
<div class="t" style="left:903.25px;top:790.60px;font-size:14px;line-height:19px;color:#3d4246;letter-spacing:-1.040px;-webkit-text-stroke:0;">18</div>
<div style="position:absolute;left:998.5px;top:790.80px;width:888.0px;height:18px;border-radius:4px;overflow:hidden;background:#a3e0f8">
<div style="position:absolute;left:0.00px;top:0;width:888.00px;height:18px;background:#2ca6d8"></div>
</div>
<div class="t" style="left:1435.25px;top:790.60px;font-size:14px;line-height:19px;color:#fff;letter-spacing:-1.040px;-webkit-text-stroke:0.1px currentColor;">18</div>
<div style="position:absolute;left:265px;top:789px;width:210px;height:7px;background:linear-gradient(to right,rgb(255,255,255) 0px 7px,rgb(238,238,238) 7px 14px,rgb(249,248,248) 14px 21px,rgb(236,235,235) 21px 28px,rgb(238,238,238) 28px 35px,rgb(255,255,255) 35px 42px,rgb(255,255,255) 42px 49px,rgb(255,255,255) 49px 56px,rgb(255,255,255) 56px 63px,rgb(243,244,247) 63px 70px,rgb(254,252,254) 70px 77px,rgb(247,246,245) 77px 84px,rgb(255,255,255) 84px 91px,rgb(255,254,253) 91px 98px,rgb(247,246,246) 98px 105px,rgb(251,252,254) 105px 112px,rgb(248,246,248) 112px 119px,rgb(255,255,255) 119px 126px,rgb(255,255,255) 126px 133px,rgb(255,255,255) 133px 140px,rgb(255,255,255) 140px 147px,rgb(235,234,234) 147px 154px,rgb(243,243,243) 154px 161px,rgb(255,255,255) 161px 168px,rgb(255,255,255) 168px 175px,rgb(255,255,255) 175px 182px,rgb(236,236,236) 182px 189px,rgb(255,255,255) 189px 196px,rgb(248,248,248) 196px 203px,rgb(248,249,251) 203px 210px)"></div>
<div style="position:absolute;left:265px;top:796px;width:210px;height:7px;background:linear-gradient(to right,rgb(206,206,206) 0px 7px,rgb(201,202,205) 7px 14px,rgb(206,205,205) 14px 21px,rgb(206,207,209) 21px 28px,rgb(218,216,218) 28px 35px,rgb(209,209,209) 35px 42px,rgb(212,212,212) 42px 49px,rgb(219,220,223) 49px 56px,rgb(215,214,214) 56px 63px,rgb(217,218,221) 63px 70px,rgb(217,215,217) 70px 77px,rgb(228,227,227) 77px 84px,rgb(213,214,217) 84px 91px,rgb(229,228,228) 91px 98px,rgb(213,214,217) 98px 105px,rgb(231,230,230) 105px 112px,rgb(220,219,218) 112px 119px,rgb(201,200,200) 119px 126px,rgb(209,210,212) 126px 133px,rgb(209,209,209) 133px 140px,rgb(216,216,216) 140px 147px,rgb(218,219,221) 147px 154px,rgb(210,208,210) 154px 161px,rgb(214,214,214) 161px 168px,rgb(231,231,231) 168px 175px,rgb(223,221,223) 175px 182px,rgb(225,226,229) 182px 189px,rgb(230,231,234) 189px 196px,rgb(206,205,204) 196px 203px,rgb(233,233,233) 203px 210px)"></div>
<div style="position:absolute;left:265px;top:803px;width:210px;height:7px;background:linear-gradient(to right,rgb(224,224,224) 0px 7px,rgb(223,222,221) 7px 14px,rgb(224,223,222) 14px 21px,rgb(209,208,207) 21px 28px,rgb(221,219,221) 28px 35px,rgb(203,204,206) 35px 42px,rgb(213,212,212) 42px 49px,rgb(203,202,201) 49px 56px,rgb(233,232,231) 56px 63px,rgb(218,218,218) 63px 70px,rgb(219,219,219) 70px 77px,rgb(199,199,199) 77px 84px,rgb(201,200,200) 84px 91px,rgb(209,208,207) 91px 98px,rgb(225,226,228) 98px 105px,rgb(232,231,230) 105px 112px,rgb(202,201,201) 112px 119px,rgb(230,229,229) 119px 126px,rgb(200,200,200) 126px 133px,rgb(201,201,201) 133px 140px,rgb(222,221,220) 140px 147px,rgb(203,204,207) 147px 154px,rgb(219,220,223) 154px 161px,rgb(212,213,215) 161px 168px,rgb(216,217,220) 168px 175px,rgb(207,206,206) 175px 182px,rgb(220,221,224) 182px 189px,rgb(229,228,228) 189px 196px,rgb(206,206,206) 196px 203px,rgb(214,214,214) 203px 210px)"></div>
<div style="position:absolute;left:245px;top:815px;width:582px;height:30px;background:#f2f2f2;"></div>
<div style="position:absolute;left:828px;top:815px;width:165px;height:30px;background:#f2f2f2;"></div>
<div style="position:absolute;left:994px;top:815px;width:913px;height:30px;background:#f2f2f2;"></div>
<div style="position:absolute;left:245px;top:814px;width:1662px;height:1px;background:#dee2e6;"></div>
<div class="t" style="left:903.25px;top:821.04px;font-size:14px;line-height:19px;color:#3d4246;letter-spacing:-1.040px;-webkit-text-stroke:0;">13</div>
<div style="position:absolute;left:998.5px;top:821.24px;width:888.0px;height:18px;border-radius:4px;overflow:hidden;background:#a3e0f8">
<div style="position:absolute;left:0.00px;top:0;width:819.69px;height:18px;background:#2ca6d8"></div>
<div style="position:absolute;left:819.69px;top:0;width:68.31px;height:18px;background:#a3e0f8"></div>
</div>
<div class="t" style="left:1401.10px;top:821.04px;font-size:14px;line-height:19px;color:#fff;letter-spacing:-1.040px;-webkit-text-stroke:0.1px currentColor;">12</div>
<div class="t" style="left:1848.46px;top:821.04px;font-size:14px;line-height:19px;color:#343a40;-webkit-text-stroke:0.1px currentColor;">1</div>
<div style="position:absolute;left:265px;top:824px;width:231px;height:7px;background:linear-gradient(to right,rgb(216,217,219) 0px 7px,rgb(215,215,215) 7px 14px,rgb(233,232,232) 14px 21px,rgb(235,233,235) 21px 28px,rgb(220,221,223) 28px 35px,rgb(239,238,237) 35px 42px,rgb(212,212,212) 42px 49px,rgb(234,232,234) 49px 56px,rgb(231,230,229) 56px 63px,rgb(232,232,232) 63px 70px,rgb(230,231,233) 70px 77px,rgb(230,231,234) 77px 84px,rgb(235,236,238) 84px 91px,rgb(220,219,219) 91px 98px,rgb(212,212,212) 98px 105px,rgb(212,213,216) 105px 112px,rgb(212,213,215) 112px 119px,rgb(218,217,217) 119px 126px,rgb(217,217,217) 126px 133px,rgb(236,236,236) 133px 140px,rgb(211,212,215) 140px 147px,rgb(230,230,230) 147px 154px,rgb(219,218,218) 154px 161px,rgb(226,225,225) 161px 168px,rgb(227,228,231) 168px 175px,rgb(231,232,235) 175px 182px,rgb(233,233,233) 182px 189px,rgb(227,225,227) 189px 196px,rgb(232,231,231) 196px 203px,rgb(230,229,228) 203px 210px,rgb(216,215,214) 210px 217px,rgb(232,232,232) 217px 224px,rgb(237,235,237) 224px 231px)"></div>
<div style="position:absolute;left:265px;top:831px;width:231px;height:7px;background:linear-gradient(to right,rgb(231,231,231) 0px 7px,rgb(234,234,234) 7px 14px,rgb(226,224,226) 14px 21px,rgb(228,228,228) 21px 28px,rgb(229,229,229) 28px 35px,rgb(229,228,228) 35px 42px,rgb(214,214,214) 42px 49px,rgb(217,216,216) 49px 56px,rgb(202,202,202) 56px 63px,rgb(222,222,222) 63px 70px,rgb(217,217,217) 70px 77px,rgb(205,204,203) 77px 84px,rgb(228,228,228) 84px 91px,rgb(235,234,233) 91px 98px,rgb(219,219,219) 98px 105px,rgb(213,213,213) 105px 112px,rgb(232,232,232) 112px 119px,rgb(212,211,210) 119px 126px,rgb(217,215,217) 126px 133px,rgb(213,212,212) 133px 140px,rgb(221,220,220) 140px 147px,rgb(226,225,224) 147px 154px,rgb(215,216,218) 154px 161px,rgb(234,235,237) 161px 168px,rgb(232,230,232) 168px 175px,rgb(234,234,234) 175px 182px,rgb(202,200,202) 182px 189px,rgb(201,202,204) 189px 196px,rgb(213,214,217) 196px 203px,rgb(221,219,221) 203px 210px,rgb(213,214,216) 210px 217px,rgb(203,204,207) 217px 224px,rgb(211,210,210) 224px 231px)"></div>
<div style="position:absolute;left:245px;top:845px;width:1662px;height:1px;background:#dee2e6;"></div>
<div class="t" style="left:906.62px;top:851.48px;font-size:14px;line-height:19px;color:#3d4246;-webkit-text-stroke:0;">9</div>
<div style="position:absolute;left:998.5px;top:851.68px;width:888.0px;height:18px;border-radius:4px;overflow:hidden;background:#a3e0f8">
<div style="position:absolute;left:0.00px;top:0;width:789.33px;height:18px;background:#2ca6d8"></div>
<div style="position:absolute;left:789.33px;top:0;width:98.67px;height:18px;background:#a3e0f8"></div>
</div>
<div class="t" style="left:1389.28px;top:851.48px;font-size:14px;line-height:19px;color:#fff;-webkit-text-stroke:0.1px currentColor;">8</div>
<div class="t" style="left:1833.28px;top:851.48px;font-size:14px;line-height:19px;color:#343a40;-webkit-text-stroke:0.1px currentColor;">1</div>
<div style="position:absolute;left:265px;top:852px;width:84px;height:7px;background:linear-gradient(to right,rgb(235,235,235) 0px 7px,rgb(255,255,255) 7px 14px,rgb(237,237,237) 14px 21px,rgb(234,233,233) 21px 28px,rgb(255,255,255) 28px 35px,rgb(255,255,255) 35px 42px,rgb(255,255,255) 42px 49px,rgb(255,255,255) 49px 56px,rgb(252,250,252) 56px 63px,rgb(250,250,250) 63px 70px,rgb(244,244,244) 70px 77px,rgb(238,238,238) 77px 84px)"></div>
<div style="position:absolute;left:265px;top:859px;width:84px;height:7px;background:linear-gradient(to right,rgb(200,200,200) 0px 7px,rgb(205,203,205) 7px 14px,rgb(216,217,219) 14px 21px,rgb(205,204,204) 21px 28px,rgb(206,204,206) 28px 35px,rgb(213,212,211) 35px 42px,rgb(220,219,218) 42px 49px,rgb(227,226,225) 49px 56px,rgb(201,200,199) 56px 63px,rgb(216,215,214) 63px 70px,rgb(202,202,202) 70px 77px,rgb(223,222,221) 77px 84px)"></div>
<div style="position:absolute;left:265px;top:866px;width:84px;height:7px;background:linear-gradient(to right,rgb(255,255,255) 0px 7px,rgb(255,255,255) 7px 14px,rgb(240,241,244) 14px 21px,rgb(255,255,255) 21px 28px,rgb(255,255,255) 28px 35px,rgb(250,248,250) 35px 42px,rgb(248,248,248) 42px 49px,rgb(251,250,250) 49px 56px,rgb(255,255,255) 56px 63px,rgb(255,255,255) 63px 70px,rgb(255,255,255) 70px 77px,rgb(245,245,245) 77px 84px)"></div>
<div style="position:absolute;left:245px;top:876px;width:582px;height:30px;background:#f2f2f2;"></div>
<div style="position:absolute;left:828px;top:876px;width:165px;height:30px;background:#f2f2f2;"></div>
<div style="position:absolute;left:994px;top:876px;width:913px;height:30px;background:#f2f2f2;"></div>
<div style="position:absolute;left:245px;top:875px;width:1662px;height:1px;background:#dee2e6;"></div>
<div class="t" style="left:906.62px;top:881.92px;font-size:14px;line-height:19px;color:#3d4246;-webkit-text-stroke:0;">8</div>
<div style="position:absolute;left:998.5px;top:882.12px;width:888.0px;height:18px;border-radius:4px;overflow:hidden;background:#a3e0f8">
<div style="position:absolute;left:0.00px;top:0;width:888.00px;height:18px;background:#2ca6d8"></div>
</div>
<div class="t" style="left:1438.62px;top:881.92px;font-size:14px;line-height:19px;color:#fff;-webkit-text-stroke:0.1px currentColor;">8</div>
<div style="position:absolute;left:265px;top:887px;width:126px;height:7px;background:linear-gradient(to right,rgb(229,228,228) 0px 7px,rgb(223,221,223) 7px 14px,rgb(236,236,236) 14px 21px,rgb(214,213,212) 21px 28px,rgb(227,227,227) 28px 35px,rgb(228,228,228) 35px 42px,rgb(239,237,239) 42px 49px,rgb(217,218,220) 49px 56px,rgb(232,231,230) 56px 63px,rgb(237,238,241) 63px 70px,rgb(219,220,223) 70px 77px,rgb(219,218,217) 77px 84px,rgb(239,238,238) 84px 91px,rgb(235,234,234) 91px 98px,rgb(228,227,227) 98px 105px,rgb(216,216,216) 105px 112px,rgb(236,236,236) 112px 119px,rgb(229,227,229) 119px 126px)"></div>
<div style="position:absolute;left:265px;top:894px;width:126px;height:7px;background:linear-gradient(to right,rgb(207,207,207) 0px 7px,rgb(222,221,220) 7px 14px,rgb(206,207,209) 14px 21px,rgb(226,226,226) 21px 28px,rgb(205,206,208) 28px 35px,rgb(203,202,201) 35px 42px,rgb(215,214,213) 42px 49px,rgb(216,217,219) 49px 56px,rgb(233,234,237) 56px 63px,rgb(210,211,213) 63px 70px,rgb(214,215,217) 70px 77px,rgb(207,208,211) 77px 84px,rgb(204,203,202) 84px 91px,rgb(219,220,223) 91px 98px,rgb(211,209,211) 98px 105px,rgb(229,229,229) 105px 112px,rgb(221,220,220) 112px 119px,rgb(229,230,232) 119px 126px)"></div>
<div style="position:absolute;left:244px;top:906px;width:1664px;height:1px;background:#dee2e6;"></div>
<div style="position:absolute;left:244px;top:907px;width:1664px;height:56px;background:#f7f7f7;border-radius:0 0 4px 4px;"></div>
<div class="t" style="left:262.30px;top:921.60px;font-size:13.5px;line-height:18px;color:#212529;letter-spacing:-0.383px;">Einträge:</div>
<div style="position:absolute;left:317px;top:918px;width:50px;height:27px;background:#fff;border:1px solid #ced4da;border-radius:3px;box-sizing:border-box;"></div>
<div class="t" style="left:326.00px;top:925.10px;font-size:9.5px;line-height:13px;color:#5a6470;">15</div>
<svg style="left:348.5px;top:926.5px" width="8" height="10" viewBox="0 0 8 10"><path d="M4 0 L7.6 3.8 H0.4 Z M4 9.5 L7.6 5.7 H0.4 Z" fill="#343a40"/></svg>
<div class="t" style="left:1010.00px;top:923.80px;font-size:13.6px;line-height:18px;color:#212529;letter-spacing:-0.442px;">Element 1 bis 15 von 33</div>
<div style="position:absolute;left:1786px;top:923px;width:104.5px;height:27px;background:#fff;border:1px solid #dee2e6;border-radius:3px;box-sizing:border-box;"></div>
<div style="position:absolute;left:1806px;top:923px;width:22px;height:27px;background:#069ad6;"></div>
<div style="position:absolute;left:1849px;top:924px;width:1px;height:25px;background:#dee2e6;"></div>
<div style="position:absolute;left:1870px;top:924px;width:1px;height:25px;background:#dee2e6;"></div>
<div class="t" style="left:1793.92px;top:930.80px;font-size:10px;line-height:13px;color:#7ab9e2;-webkit-text-stroke:0;">«</div>
<div class="t" style="left:1813.81px;top:930.00px;font-size:11.5px;line-height:15px;color:#fff;">1</div>
<div class="t" style="left:1835.61px;top:930.00px;font-size:11.5px;line-height:15px;color:#2a9ed8;">2</div>
<div class="t" style="left:1856.81px;top:930.00px;font-size:11.5px;line-height:15px;color:#2a9ed8;">3</div>
<div class="t" style="left:1877.92px;top:930.80px;font-size:10px;line-height:13px;color:#7ab9e2;-webkit-text-stroke:0;">»</div>
</body></html>
